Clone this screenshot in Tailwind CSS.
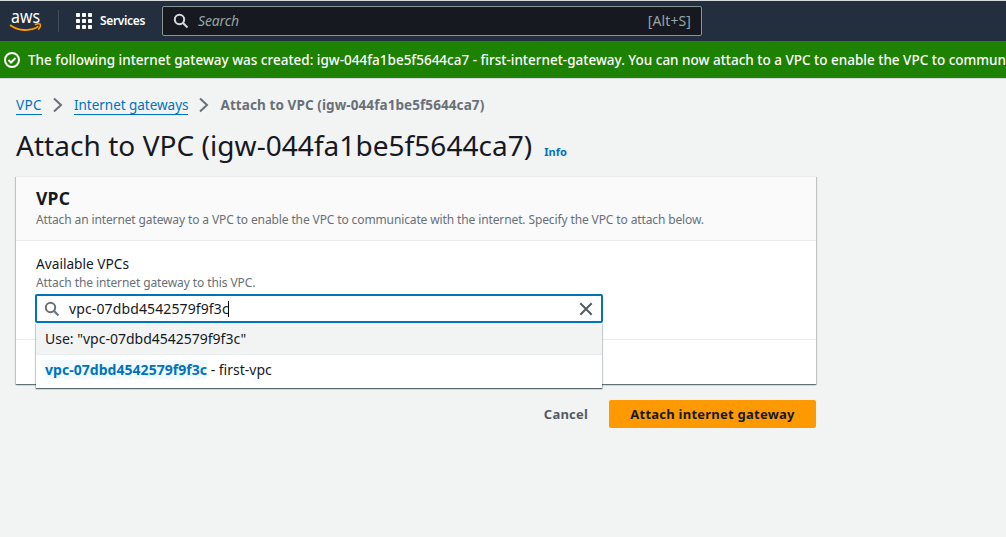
<!DOCTYPE html>
<html lang="en">
<head>
<meta charset="utf-8">
<title>Attach to VPC</title>
<script src="https://cdn.jsdelivr.net/npm/@tailwindcss/browser@4"></script>
</head>
<body class="w-[1006px] h-[537px] overflow-hidden bg-[#f2f3f3] font-['Noto_Sans','Open_Sans',sans-serif] text-[#16191f] text-[14px] whitespace-nowrap">
<header class="h-[42px] border-t border-t-[#d5dbdb] border-b border-b-[#545b64] bg-[#232f3e] flex items-center text-white">
  <svg class="ml-[9px] w-[34px] h-[24px] shrink-0 overflow-visible" viewBox="0 0 34 24" fill="none">
    <text x="2" y="13.500" font-family="Noto Sans" font-size="17.500" font-weight="400" fill="#fff" textLength="29" lengthAdjust="spacingAndGlyphs">aws</text>
    <path d="M1 16C9.500 22.300 21.500 22.500 29.500 17.600" stroke="#f90" stroke-width="1.800"/>
    <path d="M25.800 15.500C28.500 14.700 30.500 14.700 31.200 15.200C31.700 16.400 31 18.800 29.200 20.600" stroke="#f90" stroke-width="1.500"/>
  </svg>
  <div class="ml-[15px] w-px h-[22px] bg-[#424d5a]"></div>
  <svg class="ml-[17px] size-4 shrink-0" viewBox="0 0 16 16" fill="#fff"><rect width="4" height="4" rx=".8"/><rect x="6" width="4" height="4" rx=".8"/><rect x="12" width="4" height="4" rx=".8"/><rect y="6" width="4" height="4" rx=".8"/><rect x="6" y="6" width="4" height="4" rx=".8"/><rect x="12" y="6" width="4" height="4" rx=".8"/><rect y="12" width="4" height="4" rx=".8"/><rect x="6" y="12" width="4" height="4" rx=".8"/><rect x="12" y="12" width="4" height="4" rx=".8"/></svg>
  <span class="ml-2 w-[62px] text-[12px] font-semibold tracking-[-0.35px]">Services</span>
  <div class="w-[540px] h-[30px] rounded-[2px] border border-[#879596] bg-[#16191f] flex items-center px-[10px] text-[#95a5a6]">
    <svg class="size-4 shrink-0" viewBox="0 0 16 16" fill="none" stroke="#d5dbdb" stroke-width="2"><circle cx="6.500" cy="6.500" r="4.700"/><path d="M10 10l4.500 4.500"/></svg>
    <span class="ml-[9px] pb-[2px] text-[14px] italic tracking-[-0.15px]">Search</span>
    <span class="ml-auto pb-[2px] text-[14px] tracking-[0.1px]">[Alt+S]</span>
  </div>
</header>
<div class="h-[37px] border-b border-[#d5dbdb] bg-[#1d8102] text-white flex items-center pl-1">
  <svg class="size-4 shrink-0" viewBox="0 0 16 16" fill="none" stroke="#fff" stroke-width="2"><circle cx="8" cy="8" r="7"/><path d="M4.500 8l2.500 2.500 4.500-4.500"/></svg>
  <span class="ml-2 text-[13.5px] font-medium">The following internet gateway was created: igw-044fa1be5f5644ca7 - first-internet-gateway. You can now attach to a VPC to enable the VPC to commun</span>
</div>
<main class="w-[816px] pl-4 pt-4">
  <nav class="flex items-center h-5 text-[13.5px] text-[#0073bb]">
    <a class="h-5 leading-[20px] border-b border-[#0073bb] tracking-[0.4px]">VPC</a>
    <svg class="ml-[11px] mr-[11px] w-[10px] h-[16px]" viewBox="0 0 10 16" fill="none" stroke="#687078" stroke-width="2"><path d="M1 1.500L8 8 1 14.500"/></svg>
    <a class="h-5 leading-[20px] border-b border-[#0073bb] tracking-[-0.03px]">Internet gateways</a>
    <svg class="mx-[11px] w-[10px] h-[16px]" viewBox="0 0 10 16" fill="none" stroke="#687078" stroke-width="2"><path d="M1 1.500L8 8 1 14.500"/></svg>
    <span class="font-bold text-[#687078] text-[13.5px] tracking-[0.09px]">Attach to VPC (igw-044fa1be5f5644ca7)</span>
  </nav>
  <div class="flex items-baseline h-[61px] pt-[12px]">
    <h1 class="text-[28px] leading-[36px] tracking-[0.05px]">Attach to VPC (igw-044fa1be5f5644ca7)</h1>
    <a class="ml-[12px] text-[11px] font-bold text-[#0073bb]">Info</a>
  </div>
  <section class="relative h-[208px] bg-white border-t border-[#eaeded] shadow-[0_1px_1px_0_rgba(0,28,36,0.45),1px_1px_1px_0_rgba(0,28,36,0.15),-1px_1px_1px_0_rgba(0,28,36,0.15)]">
    <div class="h-[64px] px-5 pt-2 bg-[#fafafa] border-b border-[#eaeded]">
      <h2 class="text-[17.5px] leading-[26px] mb-px font-bold tracking-[0.2px]">VPC</h2>
      <p class="text-[12px] leading-[16px] text-[#687078] tracking-[-0.12px]">Attach an internet gateway to a VPC to enable the VPC to communicate with the internet. Specify the VPC to attach below.</p>
    </div>
    <div class="h-[99px] px-5 pt-[13px] border-b border-[#eaeded]">
      <div class="text-[13.7px] leading-[20px]">Available VPCs</div>
      <div class="text-[12px] leading-[18px] text-[#687078] tracking-[-0.1px]">Attach the internet gateway to this VPC.</div>
      <div class="relative -ml-px mt-[2px] w-[568px]">
        <div class="h-[29px] rounded-[2px] border-2 border-[#0073bb] bg-white flex items-center pl-[7px] pr-[7px]">
          <svg class="size-4 shrink-0" viewBox="0 0 16 16" fill="none" stroke="#687078" stroke-width="2"><circle cx="6.500" cy="6.500" r="4.700"/><path d="M10 10l4.500 4.500"/></svg>
          <span class="ml-[9px] text-[14px] tracking-[0.12px]">vpc-07dbd4542579f9f3c</span><span class="w-px h-4 -ml-px bg-black"></span>
          <svg class="ml-auto size-4" viewBox="0 0 16 16" fill="none" stroke="#545b64" stroke-width="2"><path d="M2.300 2.300l11.400 11.400M13.700 2.300L2.300 13.700"/></svg>
        </div>
        <div class="absolute left-px top-[29px] w-[566px] text-[14px] bg-white shadow-[0_1px_1px_0_rgba(0,28,36,0.5),1px_1px_1px_0_rgba(0,28,36,0.15),-1px_1px_1px_0_rgba(0,28,36,0.15)]">
          <div class="h-[32px] bg-[#f2f3f3] border-b border-[#eaeded] px-[9px] leading-[32px]">Use: "vpc-07dbd4542579f9f3c"</div>
          <div class="h-[33px] px-[9px] leading-[30px]"><span class="font-bold text-[#0073bb] bg-[#f1faff] tracking-[0.04px]">vpc-07dbd4542579f9f3c</span><span> - first-vpc</span></div>
        </div>
      </div>
    </div>
  </section>
  <div class="mt-4 flex justify-end items-center font-bold text-[13px]">
    <span class="text-[#545b64] mr-[21px] pt-px tracking-[0.2px]">Cancel</span>
    <button class="w-[207px] h-7 pt-px rounded-[2px] bg-[#f90] tracking-[0.24px]">Attach internet gateway</button>
  </div>
</main>
</body>
</html>
